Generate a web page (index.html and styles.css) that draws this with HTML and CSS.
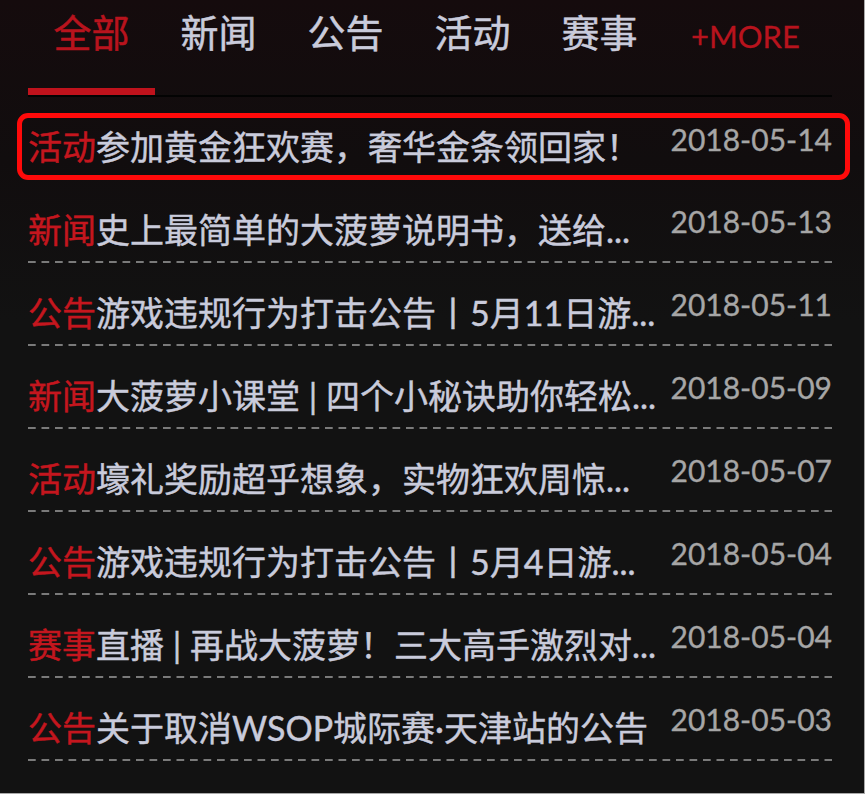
FILE: index.html
```html
<!DOCTYPE html>
<html lang="zh-CN">
<head>
<meta charset="utf-8">
<title>新闻列表</title>
<link rel="stylesheet" href="styles.css">
</head>
<body>
<div class="page">
  <div class="wrap">
    <nav class="tabs">
      <span class="tab active">全部</span>
      <span class="tab">新闻</span>
      <span class="tab">公告</span>
      <span class="tab">活动</span>
      <span class="tab">赛事</span>
      <span class="more">+MORE</span>
    </nav>
    <ul class="list">
      <li class="item hot">
        <div class="hl">
          <div class="title"><span class="tag">活动</span>参加黄金狂欢赛，奢华金条领回家！</div>
          <div class="date">2018-05-14</div>
        </div>
      </li>
      <li class="item">
        <div class="title"><span class="tag">新闻</span>史上最简单的大菠萝说明书，送给...</div>
        <div class="date">2018-05-13</div>
      </li>
      <li class="item">
        <div class="title"><span class="tag">公告</span>游戏违规行为打击公告丨5月11日游...</div>
        <div class="date">2018-05-11</div>
      </li>
      <li class="item">
        <div class="title"><span class="tag">新闻</span>大菠萝小课堂 | 四个小秘诀助你轻松...</div>
        <div class="date">2018-05-09</div>
      </li>
      <li class="item">
        <div class="title"><span class="tag">活动</span>壕礼奖励超乎想象，实物狂欢周惊...</div>
        <div class="date">2018-05-07</div>
      </li>
      <li class="item">
        <div class="title"><span class="tag">公告</span>游戏违规行为打击公告丨5月4日游...</div>
        <div class="date">2018-05-04</div>
      </li>
      <li class="item">
        <div class="title"><span class="tag">赛事</span>直播 | 再战大菠萝！三大高手激烈对...</div>
        <div class="date">2018-05-04</div>
      </li>
      <li class="item">
        <div class="title"><span class="tag">公告</span>关于取消WSOP城际赛·天津站的公告</div>
        <div class="date">2018-05-03</div>
      </li>
    </ul>
  </div>
</div>
</body>
</html>
```

FILE: styles.css
```css
html, body {
  margin: 0;
  padding: 0;
  background: #121212;
}

.page {
  box-sizing: border-box;
  width: 865px;
  height: 794px;
  overflow: hidden;
  border-right: 1px solid #a9a9a9;
  border-bottom: 1px solid #a9a9a9;
  background: linear-gradient(to bottom, #150b0d 0px, #110d0e 160px, #121212 320px, #121212 100%);
  font-family: "Lato", "Noto Sans CJK SC", sans-serif;
  color: #c9cbdb;
}

.wrap {
  width: 804px;
  padding-left: 28px;
}

.tabs {
  display: flex;
  height: 95px;
  border-bottom: 2px solid #030303;
}

.tab {
  box-sizing: border-box;
  width: 127px;
  height: 95px;
  padding-top: 7px;
  line-height: 50px;
  font-size: 38px;
  text-align: center;
  color: #c9cbdb;
  border-bottom: 7px solid transparent;
  white-space: nowrap;
  -webkit-text-stroke: 0.5px currentColor;
}

.tab.active {
  color: #b8131d;
  border-bottom-color: #bf121c;
}

.more {
  margin-left: 28px;
  padding-top: 11px;
  line-height: 50px;
  font-size: 31px;
  color: #b8131d;
  white-space: nowrap;
  -webkit-text-stroke: 0.3px currentColor;
}

.list {
  list-style: none;
  margin: 0;
  padding: 0;
}

.item {
  box-sizing: border-box;
  height: 83px;
  padding: 30px 0 0 0;
  display: flex;
  background-image: linear-gradient(to right, #7a7a7a 0, #7a7a7a 8px, transparent 8px, transparent 13.5px);
  background-size: 13.5px 2px;
  background-repeat: repeat-x;
  background-position: 0 bottom;
}

.item.hot {
  padding-top: 16px;
  background-image: none;
}

.hl {
  box-sizing: border-box;
  flex: 1;
  display: flex;
  height: 67px;
  margin: 0 -18px 0 -11px;
  padding: 9px 13px 0 6px;
  border: 5px solid #ff0a0a;
  border-radius: 11px;
}

.title {
  flex: 1;
  min-width: 0;
  max-width: 650px;
  overflow: hidden;
  white-space: nowrap;
  font-size: 34px;
  line-height: 40px;
  color: #c9cbdb;
  -webkit-text-stroke: 0.45px currentColor;
}

.tag {
  color: #c4161e;
}

.date {
  flex: none;
  align-self: flex-start;
  margin-top: 1px;
  margin-left: auto;
  font-size: 30px;
  line-height: 20px;
  color: #a6a6a6;
  white-space: nowrap;
  -webkit-text-stroke: 0.35px currentColor;
}

.hl .date {
  margin-top: 2px;
}
```
